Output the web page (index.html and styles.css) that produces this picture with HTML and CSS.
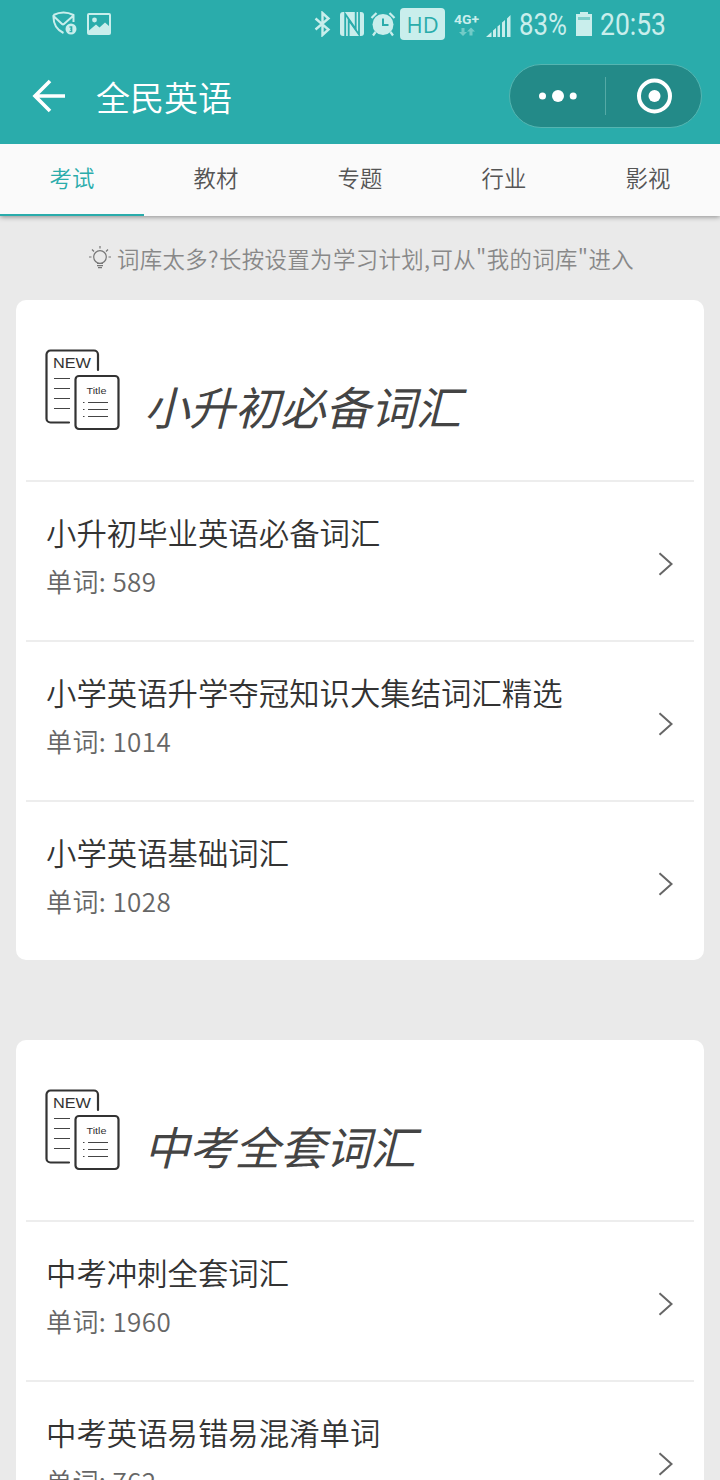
FILE: index.html
```html
<!DOCTYPE html>
<html lang="zh-CN">
<head>
  <meta charset="UTF-8">
  <meta name="viewport" content="width=device-width, initial-scale=1.0">
  <title>全民英语</title>
  <link rel="stylesheet" href="styles.css">
</head>
<body>
  <!-- shared icons -->
  <svg class="defs" width="0" height="0">
    <symbol id="book" viewBox="0 0 76 82">
      <g fill="none" stroke="#333" stroke-width="2.2" stroke-linecap="round">
        <path d="M53 21V5.5a4 4 0 0 0-4-4H5.5a4 4 0 0 0-4 4v64a4 4 0 0 0 4 4H24"/>
        <rect x="30.5" y="27" width="43" height="53" rx="3.5"/>
      </g>
      <path d="M9 29.5h16M9 39.5h16M9 49.5h16M9 59.5h16M43 53.5h20M43 60.5h20M43 67.5h20M38 53.5h1.5M38 60.5h1.5M38 67.5h1.5" fill="none" stroke="#444" stroke-width="1.2"/>
      <text x="8" y="18.5" font-size="15.5" textLength="38" lengthAdjust="spacingAndGlyphs">NEW</text>
      <text x="41.5" y="45" font-size="9.5" textLength="20" lengthAdjust="spacingAndGlyphs">Title</text>
    </symbol>
    <symbol id="arrow" viewBox="0 0 16 26">
      <path d="M1.5 2.3L13.500 13 1.5 23.7" fill="none" stroke="#666" stroke-width="2"/>
    </symbol>
  </svg>

  <header class="top">
    <div class="status">
      <div class="status-left">
        <svg width="26" height="26" viewBox="0 0 26 26">
          <path d="M1.5 4C8 .6 15 .6 21.5 4v7M1.5 4c-.5 8 3 14.5 10 18M2 5.500l8 7.5q1 .8 2 0L21 5" fill="none" stroke="#c9eeec" stroke-width="2"/>
          <circle cx="19" cy="18" r="5.5" fill="#c9eeec"/>
          <path d="M17.5 16h2.2v4.5h-2.2M18 18.2h1.7" fill="none" stroke="#2aacab" stroke-width="1.3"/>
        </svg>
        <svg width="24" height="22" viewBox="0 0 24 22">
          <rect width="24" height="22" rx="2" fill="#c9eeec"/>
          <path d="M2 2h20v11l-4-3.5-5.5 5L9 11.5l-7 6z" fill="#2aacab"/>
          <circle cx="7.5" cy="7" r="2.4" fill="#c9eeec"/>
        </svg>
      </div>
      <div class="status-right">
        <svg class="bt" width="18" height="26" viewBox="0 0 18 26">
          <path d="M1.5 7.5l13 11L8.5 24V2l6 5.5-13 11" fill="none" stroke="#c9eeec" stroke-width="2.4"/>
        </svg>
        <svg class="nfc" width="24" height="24" viewBox="0 0 24 24">
          <rect width="24" height="24" rx="3" fill="#c9eeec"/>
          <path d="M5.2 24V2l10.500 15V0" fill="none" stroke="#2aacab" stroke-width="1.8"/>
          <path d="M8.7 24V8l10.300 14.500V0" fill="none" stroke="#2aacab" stroke-width="1.8"/>
        </svg>
        <svg class="alarm" width="26" height="26" viewBox="0 0 26 26">
          <circle cx="13" cy="13.5" r="10.5" fill="#c9eeec"/>
          <path d="M1.5 7L6.5 2M24.5 7l-5-5M5.5 21L3 24.5M20.5 21l2.5 3.5" stroke="#c9eeec" stroke-width="2.2"/>
          <path d="M13 7.5V14h5.5" fill="none" stroke="#2aacab" stroke-width="2"/>
        </svg>
        <span class="hd">HD</span>
        <svg class="net" width="26" height="26" viewBox="0 0 26 26">
          <text x="0" y="12.5" font-size="13.5" font-weight="700" fill="#c9eeec" textLength="25" lengthAdjust="spacingAndGlyphs">4G+</text>
          <path d="M7.5 17v4H5l4 4 4-4h-2.500v-4zM15.5 24.5v-4H13l4-4 4 4h-2.500v4z" fill="#72cbc7"/>
        </svg>
        <svg class="signal" width="25" height="22" viewBox="0 0 25 22">
          <path d="M0 22l5.5-5v5zM7 22v-6.500l3-2.500v9zM11.5 22V11.5L14 9.500V22zM16 22V7.5l3-2.500v17zM21 22V3.5L24.5 0v22z" fill="#c9eeec"/>
        </svg>
        <svg class="pct" width="48" height="40" viewBox="0 0 48 40">
          <text x="0" y="31" font-size="31" fill="#c9eeec" textLength="48" lengthAdjust="spacingAndGlyphs">83%</text>
        </svg>
        <svg class="battery" width="16" height="24" viewBox="0 0 16 24">
          <path d="M0 2h4V0h8v2h4v22H0z" fill="#c9eeec"/>
          <path d="M2 5h12v3H2z" fill="#7ccfcb"/>
        </svg>
        <svg width="66" height="40" viewBox="0 0 66 40">
          <text x="0" y="31" font-size="31" fill="#c9eeec" textLength="66" lengthAdjust="spacingAndGlyphs">20:53</text>
        </svg>
      </div>
    </div>
    <div class="navbar">
      <svg width="34" height="34" viewBox="0 0 34 34">
        <path d="M33 17H3M18 2L3 17l15 15" fill="none" stroke="#fff" stroke-width="3.6"/>
      </svg>
      <h1>全民英语</h1>
      <div class="capsule">
        <div class="capsule-btn">
          <svg width="38" height="14" viewBox="0 0 38 14" fill="#fff">
            <circle cx="3.5" cy="7" r="3.5"/><circle cx="19" cy="7" r="6"/><circle cx="34.2" cy="7" r="3.5"/>
          </svg>
        </div>
        <div class="capsule-btn">
          <svg width="36" height="36" viewBox="0 0 36 36">
            <circle cx="18.5" cy="18" r="15.5" fill="none" stroke="#fff" stroke-width="4"/>
            <circle cx="18.5" cy="18" r="6" fill="#fff"/>
          </svg>
        </div>
      </div>
    </div>
  </header>

  <nav class="tabs">
    <a class="tab active">考试</a>
    <a class="tab">教材</a>
    <a class="tab">专题</a>
    <a class="tab">行业</a>
    <a class="tab">影视</a>
  </nav>

  <div class="hint">
    <svg width="22" height="24" viewBox="0 0 22 24" fill="none" stroke="#777" stroke-width="1.2">
      <circle cx="11" cy="11" r="6.3"/>
      <path d="M8 17.5h6M8 19.7h6M9 21.7h4M11 0v2.5M0 11h2.5M19.5 11H22M3 3.5l2 2M19 3.5l-2 2"/>
    </svg>
    <span>词库太多?长按设置为学习计划,可从"我的词库"进入</span>
  </div>

  <section class="card">
    <div class="card-head">
      <svg class="book"><use href="#book"/></svg>
      <h2>小升初必备词汇</h2>
    </div>
    <div class="item">
      <div>
        <div class="name">小升初毕业英语必备词汇</div>
        <div class="count">单词: 589</div>
      </div>
      <svg class="arrow"><use href="#arrow"/></svg>
    </div>
    <div class="item">
      <div>
        <div class="name">小学英语升学夺冠知识大集结词汇精选</div>
        <div class="count">单词: 1014</div>
      </div>
      <svg class="arrow"><use href="#arrow"/></svg>
    </div>
    <div class="item">
      <div>
        <div class="name">小学英语基础词汇</div>
        <div class="count">单词: 1028</div>
      </div>
      <svg class="arrow"><use href="#arrow"/></svg>
    </div>
  </section>

  <section class="card">
    <div class="card-head">
      <svg class="book"><use href="#book"/></svg>
      <h2>中考全套词汇</h2>
    </div>
    <div class="item">
      <div>
        <div class="name">中考冲刺全套词汇</div>
        <div class="count">单词: 1960</div>
      </div>
      <svg class="arrow"><use href="#arrow"/></svg>
    </div>
    <div class="item">
      <div>
        <div class="name">中考英语易错易混淆单词</div>
        <div class="count">单词: 762</div>
      </div>
      <svg class="arrow"><use href="#arrow"/></svg>
    </div>
  </section>
</body>
</html>
```
FILE: styles.css
```css
:root {
  --primary: #2aacab;
  --status: #c9eeec;
}

* {
  box-sizing: border-box;
}

body {
  margin: 0;
  height: 1480px;
  overflow: hidden;
  background-color: #eaeaea;
  font-family: "Noto Sans CJK SC", sans-serif;
  font-weight: 350;
}

svg {
  flex: none;
  display: block;
}

.defs {
  display: none;
}

.top {
  height: 144px;
  background-color: var(--primary);
}

/* Status bar */
.status {
  height: 48px;
  padding: 0 54px 0 52px;
  display: flex;
  justify-content: space-between;
  align-items: center;
  font-family: Roboto, sans-serif;
  font-weight: 400;
}

.status-left,
.status-right {
  display: flex;
  align-items: center;
}

.status-left {
  gap: 9px;
}

.bt {
  margin-right: 8px;
}

.nfc {
  margin-right: 6px;
}

.alarm {
  margin-right: 4px;
}

.hd {
  width: 45px;
  height: 32px;
  margin-right: 9px;
  border-radius: 4px;
  background-color: var(--status);
  color: var(--primary);
  font: 22px/32px "Open Sans", sans-serif;
  text-align: center;
}

.net {
  margin-right: 6px;
}

.signal {
  margin: 4px 8px 0 0;
}

.pct {
  margin-right: 9px;
}

.battery {
  margin-right: 8px;
}

/* Title bar */
.navbar {
  height: 96px;
  padding: 0 18px 0 32px;
  display: flex;
  align-items: center;
}

.navbar h1 {
  margin: 2px auto 0 30px;
  color: #fff;
  font-size: 34px;
  font-weight: 350;
  line-height: 50px;
}

.capsule {
  width: 193px;
  height: 64px;
  display: flex;
  align-items: center;
  border: 1px solid #55b5b1;
  border-radius: 32px;
  background-color: #238a88;
}

.capsule-btn {
  flex: 1;
  height: 38px;
  display: flex;
  align-items: center;
  justify-content: center;
}

.capsule-btn + .capsule-btn {
  border-left: 1px solid #55aaa6;
}

/* Tabs */
.tabs {
  height: 72px;
  display: flex;
  background-color: #fafafa;
  box-shadow: 0 1px 5px rgba(0, 0, 0, 0.4);
  clip-path: inset(0 0 -10px 0);
}

.tab {
  flex: 1;
  color: #555;
  font-size: 22.4px;
  line-height: 66px;
  text-align: center;
}

.tab.active {
  color: var(--primary);
  border-bottom: 2px solid var(--primary);
}

.hint {
  height: 84px;
  padding-left: 3px;
  display: flex;
  align-items: center;
  justify-content: center;
  gap: 6px;
  color: #888;
  font-size: 22.4px;
  letter-spacing: 0.4px;
}

/* Cards */
.card {
  margin: 0 16px 80px;
  padding: 0 10px;
  border-radius: 10px;
  background-color: #fff;
}

.card-head {
  height: 180px;
  padding: 0 19px;
  display: flex;
  align-items: center;
}

.book {
  width: 76px;
  height: 82px;
  font-family: "Liberation Sans", sans-serif;
  fill: #333;
}

.card-head h2 {
  margin: 29px 0 0 23px;
  color: #444;
  font-size: 45.3px;
  font-weight: 400;
  font-style: italic;
  line-height: 60px;
}

.item {
  height: 160px;
  padding: 26px 20px 0;
  display: flex;
  justify-content: space-between;
  border-top: 2px solid #ededed;
}

.name {
  color: #333;
  font-size: 30.4px;
  line-height: 48px;
}

.count {
  color: #666;
  font-size: 26px;
  line-height: 50px;
  letter-spacing: 0.4px;
}

.arrow {
  width: 16px;
  height: 26px;
  margin-top: 43px;
}
```
